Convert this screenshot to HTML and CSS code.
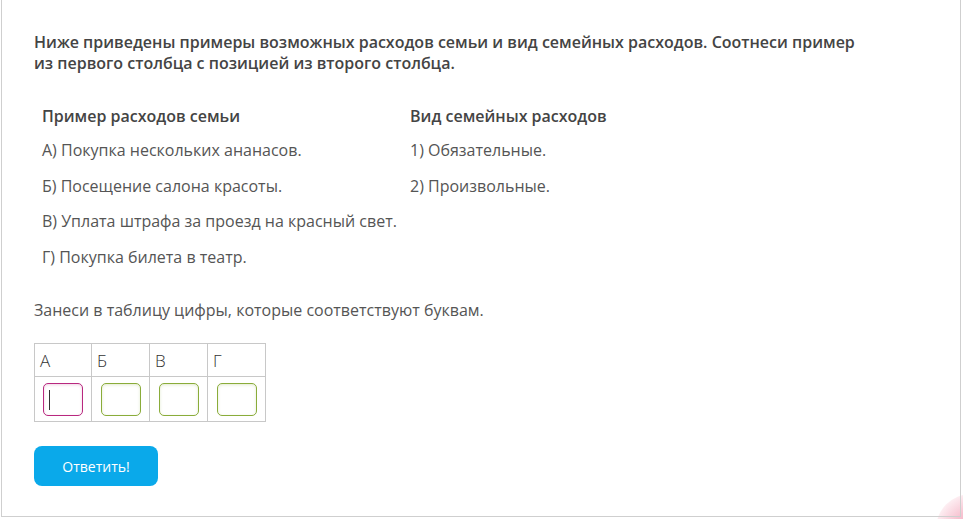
FILE: index.html
```html
<!DOCTYPE html>
<html lang="ru">
<head>
<meta charset="utf-8">
<title>Задание</title>
<link rel="stylesheet" href="styles.css">
</head>
<body>
<div class="frame">
  <p class="task">Ниже приведены примеры возможных расходов семьи и вид семейных расходов. Соотнеси пример из первого столбца с позицией из второго столбца.</p>
  <div class="pairs">
    <div class="head">Пример расходов семьи</div>
    <div class="head">Вид семейных расходов</div>
    <div class="cell">А) Покупка нескольких ананасов.</div>
    <div class="cell">1) Обязательные.</div>
    <div class="cell">Б) Посещение салона красоты.</div>
    <div class="cell">2) Произвольные.</div>
    <div class="cell">В) Уплата штрафа за проезд на красный свет.</div>
    <div class="cell"></div>
    <div class="cell">Г) Покупка билета в театр.</div>
    <div class="cell"></div>
  </div>
  <p class="note">Занеси в таблицу цифры, которые соответствуют буквам.</p>
  <table class="answers">
    <tr class="letters"><td>А</td><td>Б</td><td>В</td><td>Г</td></tr>
    <tr class="fields">
      <td><span class="box box-focus"><span class="caret"></span></span></td>
      <td><span class="box"></span></td>
      <td><span class="box"></span></td>
      <td><span class="box"></span></td>
    </tr>
  </table>
  <button class="submit" type="button">Ответить!</button>
</div>
<div class="blob-clip"><div class="blob"></div></div>
</body>
</html>
```
FILE: styles.css
```css
html, body {
  margin: 0;
  padding: 0;
  background: #ffffff;
  overflow: hidden;
}
body {
  width: 963px;
  height: 519px;
  position: relative;
  font-family: "Open Sans", "Noto Sans", sans-serif;
  color: #555;
}
.frame {
  margin-left: 1px;
  width: 960px;
  height: 517px;
  border: 1px solid #cfcfcf;
  border-top: none;
  padding: 32px 0 0 32px;
  box-sizing: border-box;
  position: relative;
  z-index: 1;
}
.task {
  margin: 0;
  max-width: 830px;
  font-size: 16px;
  line-height: 21px;
  font-weight: 600;
  color: #444;
}
.pairs {
  margin-top: 23px;
  padding-left: 8px;
  display: grid;
  grid-template-columns: 368px auto;
  grid-auto-rows: 35.5px;
}
.pairs > div {
  display: flex;
  align-items: center;
  font-size: 16px;
  color: #555;
}
.pairs .head {
  font-weight: 600;
  color: #444;
  height: 37px;
}
.note {
  margin: 18px 0 0;
  font-size: 16px;
  line-height: 35px;
  color: #555;
}
.answers {
  margin-top: 15.5px;
  border-collapse: collapse;
  table-layout: fixed;
}
.answers td {
  border: 1px solid #c8c8c8;
  width: 58px;
  padding: 0;
  box-sizing: border-box;
}
.answers td:first-child {
  width: 57px;
}
.letters td {
  height: 33px;
  padding-left: 5px;
  font-size: 17px;
  font-weight: 300;
  color: #333;
  vertical-align: middle;
}
.fields td {
  height: 45px;
  text-align: center;
  vertical-align: middle;
}
.box {
  display: inline-block;
  vertical-align: middle;
  width: 40px;
  height: 33px;
  box-sizing: border-box;
  border: 1px solid #8aac3a;
  border-radius: 5px;
  box-shadow: inset 0 1px 3px rgba(140, 170, 60, 0.25);
  position: relative;
  background: #fff;
}
.box-focus {
  border-color: #b8287f;
  box-shadow: inset 0 1px 3px rgba(184, 40, 127, 0.2);
}
.caret {
  position: absolute;
  left: 5px;
  top: 6px;
  width: 1px;
  height: 20px;
  background: #333;
}
.submit {
  display: block;
  margin-top: 24px;
  width: 124px;
  height: 40px;
  border: none;
  border-radius: 8px;
  background: #0aa9ea;
  color: #fff;
  font-family: "Open Sans", "Noto Sans", sans-serif;
  font-size: 14px;
  cursor: pointer;
}
.blob-clip {
  position: absolute;
  right: 0;
  bottom: 0;
  width: 30px;
  height: 26px;
  overflow: hidden;
}
.blob {
  position: absolute;
  left: 3px;
  top: 1px;
  width: 70px;
  height: 70px;
  border-radius: 50%;
  background: radial-gradient(circle at 60% 60%, #f4a9bf 0%, #f7c3d1 45%, #fdeef2 75%, rgba(255,255,255,0) 100%);
}
```
